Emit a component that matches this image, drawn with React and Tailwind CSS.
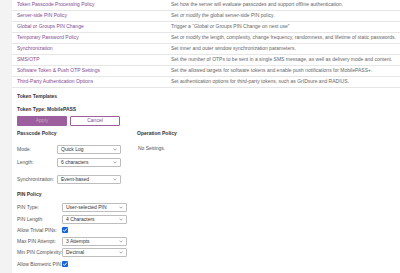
import React from "react";

const rows = [
  ["Token Passcode Processing Policy", "Set how the server will evaluate passcodes and support offline authentication."],
  ["Server-side PIN Policy", "Set or modify the global server-side PIN policy."],
  ["Global or Groups PIN Change", "Trigger a \u201cGlobal or Groups PIN Change on next use\u201d"],
  ["Temporary Password Policy", "Set or modify the length, complexity, change frequency, randomness, and lifetime of static passwords."],
  ["Synchronization", "Set inner and outer window synchronization parameters."],
  ["SMS/OTP", "Set the number of OTPs to be sent in a single SMS message, as well as delivery mode and content."],
  ["Software Token & Push OTP Settings", "Set the allowed targets for software tokens and enable push notifications for MobilePASS+."],
  ["Third-Party Authentication Options", "Set authentication options for third-party tokens, such as GrIDsure and RADIUS."],
];

function Chevron() {
  return (
    <svg width="4" height="3" viewBox="0 0 4 3" className="shrink-0">
      <path d="M0.5 0.6 L2 2.2 L3.5 0.6" fill="none" stroke="#777" strokeWidth="0.6" />
    </svg>
  );
}

function Select({ value, w = "w-[64px]" }) {
  return (
    <div className={`${w} h-[9px] border border-[#bdbdbd] rounded-[1px] bg-white flex items-center justify-between pl-[3px] pr-[3px] text-[#333]`}>
      <span className="leading-none">{value}</span>
      <Chevron />
    </div>
  );
}

function Check() {
  return (
    <svg width="6" height="6" viewBox="0 0 6 6" className="block shrink-0">
      <rect x="0" y="0" width="6" height="6" rx="1" fill="#1565d8" />
      <path d="M1.2 3.1 L2.5 4.3 L4.9 1.5" fill="none" stroke="#ffffff" strokeWidth="1" />
    </svg>
  );
}

function PinRow({ label, children, cls }) {
  return (
    <div className={`flex items-center ${cls}`}>
      <div className="w-[45px] shrink-0 text-[#555] whitespace-nowrap leading-none">{label}</div>
      {children}
    </div>
  );
}

export default function App() {
  return (
    <div
      className="w-[400px] h-[273px] overflow-hidden flex bg-white text-[5px]"
      style={{ fontFamily: '"Liberation Sans", Arial, sans-serif' }}
    >
      <div className="w-[12px] shrink-0 bg-[#f3f3f3]" />
      <div className="flex-1 min-w-0">
        <div className="flex flex-col">
          {rows.map(([a, b]) => (
            <div key={a} className="h-[11px] flex items-center border-b border-[#e6e6e6] whitespace-nowrap">
              <div className="w-[154px] shrink-0 pl-[5px] text-[#834a8f]">{a}</div>
              <div className="pl-[5px] text-[#666]">{b}</div>
            </div>
          ))}
        </div>
        <div className="pl-[5px]">
          <div className="mt-[3px] h-[10px] leading-[10px] font-bold text-[#333]">Token Templates</div>
          <div className="mt-[3px] h-[10px] leading-[10px] font-bold text-[#333]">Token Type: MobilePASS</div>
          <div className="mt-[2px] flex gap-[3px]">
            <div className="w-[50px] h-[10px] bg-[#9c5e9c] rounded-[1px] flex items-center justify-center text-[#caa6c8]">Apply</div>
            <div className="w-[50px] h-[10px] border border-[#9c5e9c] rounded-[1px] bg-white flex items-center justify-center text-[#8a4a8e]">Cancel</div>
          </div>
          <div className="flex">
            <div className="w-[120px] shrink-0">
              <div className="mt-[2px] h-[10px] leading-[10px] font-bold text-[#333]">Passcode Policy</div>
              <div className="mt-[7px] flex items-center">
                <div className="w-[40px] shrink-0 text-[#555] leading-none">Mode:</div>
                <Select value="Quick Log" />
              </div>
              <div className="mt-[4px] flex items-center">
                <div className="w-[40px] shrink-0 text-[#555] leading-none">Length:</div>
                <Select value="6 characters" />
              </div>
              <div className="mt-[8px] flex items-center">
                <div className="w-[40px] shrink-0 text-[#555] leading-none whitespace-nowrap">Synchronization:</div>
                <Select value="Event-based" />
              </div>
            </div>
            <div>
              <div className="mt-[2px] h-[10px] leading-[10px] font-bold text-[#333]">Operation Policy</div>
              <div className="mt-[5px] h-[10px] leading-[10px] pl-[1px] text-[#555]">No Settings.</div>
            </div>
          </div>
          <div className="mt-[5px] h-[10px] leading-[10px] font-bold text-[#333]">PIN Policy</div>
          <PinRow label="PIN Type:" cls="mt-[4px]"><Select value="User-selected PIN" w="w-[65px]" /></PinRow>
          <PinRow label="PIN Length:" cls="mt-[3px]"><Select value="4 Characters" w="w-[65px]" /></PinRow>
          <PinRow label="Allow Trivial PINs:" cls="mt-[2px] h-[8px]"><Check /></PinRow>
          <PinRow label="Max PIN Attempt:" cls="mt-[3px]"><Select value="3 Attempts" w="w-[65px]" /></PinRow>
          <PinRow label="Min PIN Complexity:" cls="mt-[2px]"><Select value="Decimal" w="w-[65px]" /></PinRow>
          <PinRow label="Allow Biometric PIN:" cls="mt-[3px] h-[8px]"><Check /></PinRow>
        </div>
      </div>
    </div>
  );
}
